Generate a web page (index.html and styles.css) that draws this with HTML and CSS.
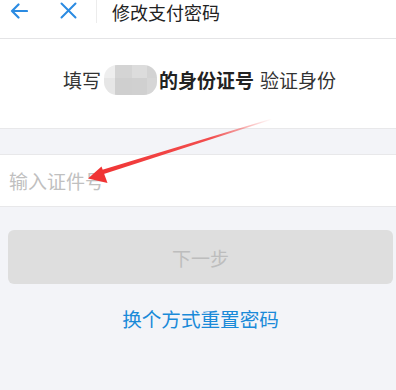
FILE: index.html
```html
<!DOCTYPE html>
<html lang="zh-CN">
<head>
<meta charset="utf-8">
<title>修改支付密码</title>
<link rel="stylesheet" href="styles.css">
</head>
<body>
<div class="page">
  <header class="header">
    <span class="back">
      <svg width="18" height="16" viewBox="0 0 18 16"><path d="M17 8H2M8.5 1.5L2 8l6.5 6.5" fill="none" stroke="#2b8be2" stroke-width="2.2" stroke-linecap="round" stroke-linejoin="round"/></svg>
    </span>
    <span class="close">
      <svg width="17" height="17" viewBox="0 0 17 17"><path d="M1.5 1.5l14 14M15.5 1.5l-14 14" fill="none" stroke="#2b8be2" stroke-width="2" stroke-linecap="round"/></svg>
    </span>
    <span class="divider"></span>
    <h1 class="title">修改支付密码</h1>
  </header>

  <section class="intro">
    <div class="intro-line">
      <span>填写</span>
      <span class="mosaic">
        <span class="m c1"></span><span class="m c2"></span><span class="m c3"></span><span class="m c4"></span>
        <span class="m c5"></span><span class="m c6"></span><span class="m c7"></span><span class="m c8"></span>
      </span>
      <strong>的身份证号</strong>
      <span class="sp">验证身份</span>
    </div>
  </section>

  <div class="gap"></div>

  <div class="input-row">
    <span class="placeholder">输入证件号</span>
  </div>

  <button class="next" type="button">下一步</button>

  <a class="alt" href="#">换个方式重置密码</a>
</div>

<svg class="annot" width="396" height="390" viewBox="0 0 396 390">
  <defs>
    <linearGradient id="fade" gradientUnits="userSpaceOnUse" x1="272" y1="119" x2="100" y2="174">
      <stop offset="0" stop-color="#f23c3c" stop-opacity="0"/>
      <stop offset="0.35" stop-color="#f23c3c" stop-opacity="0.9"/>
      <stop offset="1" stop-color="#f03434" stop-opacity="1"/>
    </linearGradient>
  </defs>
  <polygon points="272.2,119.4 271.8,118.6 101.6,169.9 103,174.2" fill="url(#fade)"/>
  <polygon points="88,178.5 101.5,166.5 103.5,172 107.5,183" fill="#f03434"/>
</svg>
</body>
</html>
```
FILE: styles.css
```css
* { box-sizing: border-box; }
html, body { margin: 0; padding: 0; }
body {
  width: 396px;
  height: 390px;
  overflow: hidden;
  background: #f3f4f8;
  font-family: "Noto Sans CJK SC", "Noto Sans", sans-serif;
  color: #333;
  position: relative;
}
.page { display: flex; flex-direction: column; }

.header {
  height: 39px;
  background: #fff;
  border-bottom: 1px solid #e4e4e6;
  display: flex;
  align-items: flex-start;
}
.back { margin-left: 10px; margin-top: 3px; display: flex; }
.close { margin-left: 32px; margin-top: 2px; display: flex; }
.divider { margin-left: 19px; width: 1px; height: 23px; background: #ececec; }
.title {
  margin: 0 0 0 15px;
  font-size: 18px;
  font-weight: normal;
  line-height: 24px;
  color: #222;
}

.intro {
  background: #fff;
  height: 90px;
  padding-top: 26px;
  border-bottom: 1px solid #e8e8ea;
  display: flex;
  justify-content: center;
}
.intro-line {
  display: flex;
  align-items: center;
  height: 30px;
  font-size: 19px;
  line-height: 30px;
  color: #333;
  padding-left: 3px;
}
.intro-line strong { color: #222; font-weight: bold; }
.sp { margin-left: 6px; }
.mosaic {
  width: 53px;
  height: 30px;
  margin: 0 2px 0 3px;
  border-radius: 13px;
  overflow: hidden;
  display: grid;
  grid-template-columns: 11px 17px 15px 10px;
  grid-template-rows: 13px 17px;
}
.m { display: block; }
.c1 { background: #eeeeee; }
.c2 { background: #d4d4d4; }
.c3 { background: #dcdcdc; }
.c4 { background: #d3d3d3; }
.c5 { background: #e6e6e6; }
.c6 { background: #cfcfcf; }
.c7 { background: #d0d0d0; }
.c8 { background: #d6d6d6; }

.gap { height: 25px; }

.input-row {
  height: 53px;
  background: #fff;
  border-top: 1px solid #e8e8ea;
  border-bottom: 1px solid #e8e8ea;
  display: flex;
  align-items: center;
  padding-left: 9px;
}
.placeholder { font-size: 19px; color: #c0c0c0; }

.next {
  margin: 23px 3px 0 8px;
  height: 54px;
  border: none;
  border-radius: 6px;
  background: #dedede;
  color: #bdbdbd;
  font-family: inherit;
  font-size: 19px;
  padding: 0;
}

.alt {
  margin-top: 22px;
  align-self: center;
  padding-left: 5px;
  font-size: 19.6px;
  line-height: 26px;
  color: #1a8ad8;
  text-decoration: none;
}

.annot { position: absolute; left: 0; top: 0; pointer-events: none; }
```
